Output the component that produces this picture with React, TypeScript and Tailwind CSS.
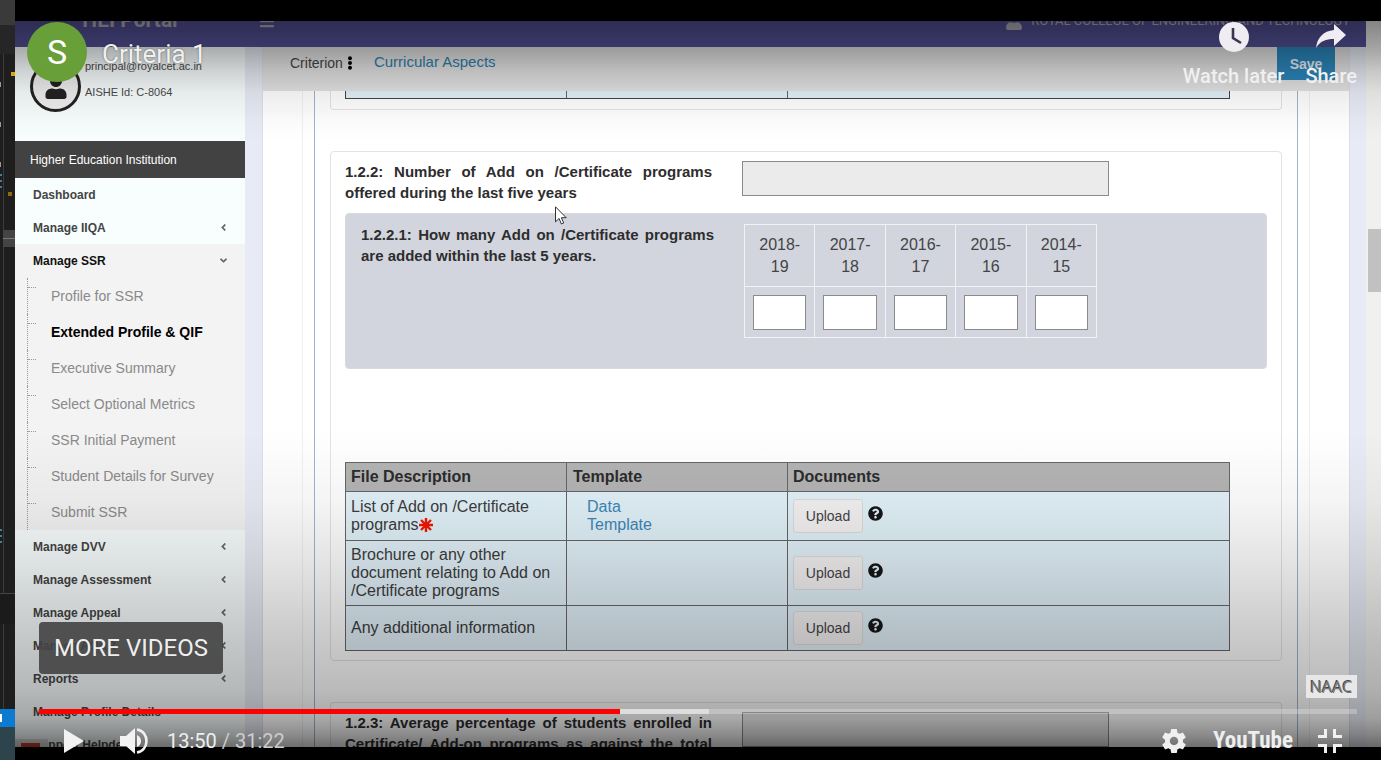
import { FaAngleDown, FaAngleLeft, FaBars, FaEllipsisV, FaQuestionCircle, FaUser } from "react-icons/fa";

const manageItems = ["Manage DVV", "Manage Assessment", "Manage Appeal", "Manage AQAR", "Reports"];
const ssrItems = [
  "Profile for SSR",
  "Extended Profile & QIF",
  "Executive Summary",
  "Select Optional Metrics",
  "SSR Initial Payment",
  "Student Details for Survey",
  "Submit SSR",
];
const years = ["2018-19", "2017-18", "2016-17", "2015-16", "2014-15"];
const documents = [
  { name: "List of Add on /Certificate programs", required: true, template: true, height: "h-[49px]" },
  { name: "Brochure or any other document relating to Add on /Certificate programs", required: false, template: false, height: "h-[65px]" },
  { name: "Any additional information", required: false, template: false, height: "h-[45px]" },
];

function EditorStrip() {
  return (
    <div aria-hidden="true" className="flex w-[15px] shrink-0 flex-col overflow-hidden bg-[#1e1e1e]">
      <div className="h-[25px] bg-[#3a3a3b]" />
      <div className="h-[29px] bg-[#262627]" />
      <div className="relative flex-1 border-b border-[#444]">
        <div className="ml-[3px] h-full border-l border-[#3c3c3c]" />
        <div className="absolute top-[18px] right-0 size-1 bg-[#d9a90a]" />
        <div className="absolute top-[138px] right-[3px] size-1 bg-[#8f6a10]" />
        <div className="absolute top-[176px] right-0 left-[3px] flex h-[17px] items-center bg-[#444]">
          <div className="h-px w-full bg-[#777]" />
        </div>
        <div className="absolute top-[120px] left-0 flex flex-col gap-1">
          <i className="h-[2px] w-[2px] bg-[#4d7a99]" />
          <i className="h-[2px] w-[2px] bg-[#4d7a99]" />
          <i className="h-[2px] w-[2px] bg-[#4d7a99]" />
        </div>
        <div className="absolute top-[28px] left-0 flex flex-col gap-[35px]">
          <i className="h-[5px] w-px bg-[#999]" />
          <i className="h-[5px] w-px bg-[#999]" />
          <i className="h-[5px] w-px bg-[#999]" />
        </div>
        <div className="absolute bottom-[50px] left-0 flex flex-col gap-1">
          <i className="h-[2px] w-[2px] bg-[#4d7a99]" />
          <i className="h-[2px] w-[2px] bg-[#4d7a99]" />
          <i className="h-[2px] w-[2px] bg-[#4d7a99]" />
        </div>
      </div>
      <div className="h-[30px] bg-[#1b1b1b]" />
      <div className="h-[85px]">
        <div className="ml-[3px] h-full border-l border-[#3c3c3c]" />
      </div>
      <div className="h-[18px] overflow-hidden bg-[#0a7bd0]">
        <div className="mt-[5px] h-2 w-[2px] bg-white" />
      </div>
      <div className="h-[33px] bg-[#2d444c]" />
    </div>
  );
}

function PortalHeader() {
  return (
    <header className="h-[26px] shrink-0 overflow-hidden bg-[#555299]">
      <div className="-mt-[26px] flex h-[52px] items-center font-[Roboto,sans-serif] text-[#b4b4bc]">
        <div className="w-[230px] text-center text-[21px] font-bold">HEI Portal</div>
        <button type="button" aria-label="Toggle navigation" className="ml-[14px]">
          <FaBars size={16} />
        </button>
        <div className="ml-auto flex items-center gap-2 pr-4 text-[13px]">
          <FaUser size={18} />
          <span>ROYAL COLLEGE OF ENGINEERING AND TECHNOLOGY</span>
        </div>
      </div>
    </header>
  );
}

function MenuRow({ label, icon, active }: { label: string; icon?: "left" | "down"; active?: boolean }) {
  return (
    <a
      href="#"
      className={`flex h-[33px] shrink-0 items-center justify-between pr-4 pl-[18px] text-xs font-bold ${active ? "bg-[#f3f3f3] text-[#111]" : "text-[#444]"}`}
    >
      {label}
      {icon === "left" && <FaAngleLeft size={11} className="text-[#666]" />}
      {icon === "down" && <FaAngleDown size={11} className="text-[#666]" />}
    </a>
  );
}

function Sidebar() {
  return (
    <nav className="flex w-[230px] shrink-0 flex-col overflow-hidden bg-[#f8fdfd]">
      <div className="flex h-[94px] shrink-0 gap-1 pt-[14px] pl-[15px]">
        <div className="flex size-[51px] shrink-0 items-end justify-center overflow-hidden rounded-full border-[3px] border-[#222] bg-[#eee]">
          <FaUser size={24} className="mb-[10px] text-[#222]" />
        </div>
        <div className="-mt-2 text-[11px] leading-[26px] text-[#4a4a4a]">
          <p>principal@royalcet.ac.in</p>
          <p>AISHE Id: C-8064</p>
        </div>
      </div>
      <h2 className="flex h-[37px] shrink-0 items-center bg-[#424242] pl-[15px] text-xs text-white">
        Higher Education Institution
      </h2>
      <MenuRow label="Dashboard" />
      <MenuRow label="Manage IIQA" icon="left" />
      <MenuRow label="Manage SSR" icon="down" active />
      <ul className="shrink-0 bg-[#f3f3f3] pt-px pl-3">
        {ssrItems.map((item) => (
          <li key={item} className="flex h-9 border-l border-dotted border-[#999]">
            <span className="mt-[9px] w-2 border-t border-dotted border-[#999]" />
            <a
              href="#"
              className={`ml-[15px] self-center text-sm ${item === "Extended Profile & QIF" ? "font-bold text-black" : "text-[#8a8a8a]"}`}
            >
              {item}
            </a>
          </li>
        ))}
      </ul>
      {manageItems.map((item) => (
        <MenuRow key={item} label={item} icon="left" />
      ))}
      <MenuRow label="Manage Profile Details" />
      <div className="relative shrink-0">
        <MenuRow label="Support Helpdesk" />
        <div className="absolute top-[11px] left-0 h-5 w-[33px] bg-[#dedede] pt-1 pl-1.5">
          <div className="h-4 w-[19px] bg-[#c9402f]" />
        </div>
      </div>
    </nav>
  );
}

function YearTable() {
  return (
    <table className="w-full table-fixed border-collapse self-start text-base leading-[22px] text-[#444]">
      <thead>
        <tr>
          {years.map((year) => (
            <th key={year} scope="col" className="h-[62px] border border-[#f1f2f5] px-3 font-normal">
              {year}
            </th>
          ))}
        </tr>
      </thead>
      <tbody>
        <tr>
          {years.map((year) => (
            <td key={year} className="h-[51px] border border-[#f1f2f5] px-2">
              <input aria-label={`Programs added in ${year}`} className="block h-[35px] w-full border border-[#8b8b8b] bg-white px-1 text-sm" />
            </td>
          ))}
        </tr>
      </tbody>
    </table>
  );
}

function DocumentTable() {
  return (
    <table className="mt-[93px] mr-[37px] table-fixed border-collapse border border-[#444] text-base leading-[18px] text-[#3c3c3c]">
      <thead>
        <tr className="h-[29px] bg-[#b4b4b4] text-left text-[#2b2b2b]">
          <th scope="col" className="w-1/4 border border-[#666] px-[5px]">File Description</th>
          <th scope="col" className="w-1/4 border border-[#666] px-1.5">Template</th>
          <th scope="col" className="border border-[#666] px-[5px]">Documents</th>
        </tr>
      </thead>
      <tbody>
        {documents.map((doc) => (
          <tr key={doc.name} className={`bg-[#e2f1f9] ${doc.height}`}>
            <td className="border border-[#666] px-[5px]">
              {doc.name}
              {doc.required && (
                <svg viewBox="0 0 14 14" role="img" aria-label="required" className="inline size-[14px] align-[-2px]">
                  <path d="M7 0v14M0 7h14M2 2l10 10M12 2L2 12" stroke="#f01800" strokeWidth="2.4" />
                </svg>
              )}
            </td>
            <td className="border border-[#666] px-5">
              {doc.template && (
                <a href="#" className="block w-[70px] text-[#3c87b8]">
                  Data Template
                </a>
              )}
            </td>
            <td className="border border-[#666] px-[5px]">
              <div className="flex items-center gap-[5px]">
                <button type="button" className="h-[34px] w-[70px] rounded-[3px] border border-[#dcdcdc] bg-[#f3f1f2] text-sm text-[#444]">
                  Upload
                </button>
                <FaQuestionCircle size={15} className="mb-1.5 text-[#161616]" />
              </div>
            </td>
          </tr>
        ))}
      </tbody>
    </table>
  );
}

function MetricRow({ id, text }: { id: string; text: string }) {
  return (
    <div className="grid grid-cols-[367fr_367fr_128fr] gap-x-[30px]">
      <label htmlFor={id} className="text-justify text-[15px] leading-[21px] font-bold text-[#2d2d2d]">
        {text}
      </label>
      <input id={id} readOnly className="h-[35px] w-full border border-[#8b8b8b] bg-[#ebebeb] px-2 text-sm" />
    </div>
  );
}

function MainContent() {
  return (
    <main className="flex min-w-0 flex-1 flex-col overflow-hidden border-x border-[#dcdfe8] bg-white">
      <div className="flex h-11 shrink-0 items-start bg-[#e4e4e4] pr-[14px] pl-[27px]">
        <span className="mt-[5px] flex items-center text-sm leading-[22px] text-[#444]">
          Criterion
          <FaEllipsisV size={14} className="text-black" />
        </span>
        <a href="#" className="mt-1 ml-[17px] text-[15px] leading-[22px] text-[#2b7fae]">
          Curricular Aspects
        </a>
        <button type="button" className="ml-auto h-[33px] w-[58px] bg-[#2b86bb] text-sm font-bold text-[#e5eef4]">
          Save
        </button>
      </div>
      <div className="mx-[39px] flex flex-1 flex-col border-x border-[#f0f0f0] px-[11px]">
        <div className="flex flex-1 flex-col border-x border-[#9fb4cc] px-[15px]">
          <section className="h-[19px] shrink-0 rounded-b border border-t-0 border-[#e3e3e3] px-[14px]">
            <div className="mr-[37px] flex h-2 border-x border-b border-[#444] bg-[#e2f1f9]">
              <div className="w-1/4 border-r border-[#666]" />
              <div className="w-1/4 border-r border-[#666]" />
            </div>
          </section>
          <section className="mt-[41px] flex flex-col rounded border border-[#e3e3e3] px-[14px] py-[9px]">
            <MetricRow id="metric-122" text="1.2.2: Number of Add on /Certificate programs offered during the last five years" />
            <div className="mt-[10px] grid h-[156px] grid-cols-[353fr_353fr_124fr] gap-x-[30px] rounded border border-[#d8dae0] bg-[#d2d5de] px-[15px] pt-[10px]">
              <p className="text-justify text-[15px] leading-[21px] font-bold text-[#2d2d2d]">
                1.2.2.1: How many Add on /Certificate programs are added within the last 5 years.
              </p>
              <YearTable />
            </div>
            <DocumentTable />
          </section>
          <section className="mt-[41px] rounded-t border border-b-0 border-[#e3e3e3] px-[14px] pt-[9px]">
            <MetricRow id="metric-123" text="1.2.3: Average percentage of students enrolled in Certificate/ Add-on programs as against the total number of students during the last five years" />
          </section>
        </div>
      </div>
    </main>
  );
}

function PlayerTop() {
  return (
    <div className="absolute inset-x-0 top-[22px] flex items-start pr-6 pl-3 font-[Roboto,sans-serif] text-[#f0f0f0]">
      <a href="#" aria-label="Channel" className="flex size-[60px] items-center justify-center rounded-full bg-[#689f38] text-[34px] text-white">
        S
      </a>
      <a href="#" className="mt-4 ml-[15px] text-[26px] leading-8 [text-shadow:0_0_2px_rgba(0,0,0,.5)]">
        Criteria 1
      </a>
      <div className="ml-auto flex items-end gap-[21px] text-xl leading-6 font-medium [text-shadow:0_0_3px_rgba(0,0,0,.6)]">
        <button type="button" className="flex flex-col items-center gap-3">
          <svg viewBox="0 0 30 30" className="size-[30px]" aria-hidden="true">
            <circle cx="15" cy="15" r="15" fill="#efedf2" />
            <path d="M14 6v10l8 5" fill="none" stroke="#39374f" strokeWidth="2.6" />
          </svg>
          Watch later
        </button>
        <button type="button" className="flex flex-col items-center gap-3">
          <svg viewBox="0 0 30 30" className="size-[30px]" aria-hidden="true">
            <path d="M18 2l12 11-12 11v-7C10 17 4 19 0 26 1 16 7 9 18 8z" fill="#efedf2" />
          </svg>
          Share
        </button>
      </div>
    </div>
  );
}

function PlayerBottom() {
  return (
    <div className="absolute inset-x-6 bottom-0 flex flex-col font-[Roboto,sans-serif] text-[#eee]">
      <div className="flex items-end justify-between">
        <button type="button" className="mb-[35px] h-[52px] w-[184px] rounded bg-[#424242]/90 text-2xl">
          MORE VIDEOS
        </button>
        <span className="mb-[11px] flex h-[23px] w-[51px] items-center justify-center bg-[#e8e8e8] font-['Open_Sans',sans-serif] text-base text-[#777] [text-shadow:-1px_-1px_0_#444]">
          NAAC
        </span>
      </div>
      <div className="relative h-[5px] bg-white/25">
        <div className="absolute inset-y-0 left-0 w-[50.8%] bg-white/45" />
        <div className="absolute inset-y-0 left-0 w-[44.1%] bg-[#f00]" />
        <input type="range" aria-label="Seek" min={0} max={1882} defaultValue={830} className="absolute inset-0 h-full w-full cursor-pointer opacity-0" />
      </div>
      <div className="flex h-[46px] items-center pt-2 pr-[15px] pl-[25px]">
        <button type="button" aria-label="Play">
          <svg viewBox="0 0 20 24" className="h-6 w-5">
            <path d="M0 0l20 12L0 24z" fill="#f2f2f2" />
          </svg>
        </button>
        <button type="button" aria-label="Mute" className="ml-9">
          <svg viewBox="0 0 28 26" className="h-[26px] w-7">
            <path d="M0 8h6l9-8v26l-9-8H0z" fill="#f2f2f2" />
            <path d="M17 7q4 2 4 6t-4 6z" fill="#f2f2f2" />
            <path d="M17 1.5c6 1 9.500 6 9.500 11.500S23 23.500 17 24.500" fill="none" stroke="#f2f2f2" strokeWidth="2.600" />
          </svg>
        </button>
        <span className="ml-[19px] text-xl leading-6">
          13:50 <span className="text-[#ccc]">/ 31:22</span>
        </span>
        <button type="button" aria-label="Settings" className="ml-auto">
          <svg viewBox="2 2 20 20" className="size-6" fill="#f0f0f0">
            <path d="M19.430 12.980c.04-.32.07-.64.07-.98s-.03-.66-.07-.98l2.110-1.650c.19-.15.24-.42.12-.64l-2-3.460c-.12-.22-.39-.3-.61-.22l-2.490 1c-.52-.4-1.080-.73-1.690-.98l-.38-2.650C14.460 2.180 14.250 2 14 2h-4c-.25 0-.46.18-.49.42l-.38 2.650c-.61.25-1.170.59-1.690.98l-2.490-1c-.23-.09-.49 0-.61.22l-2 3.460c-.13.22-.07.49.12.64l2.110 1.650c-.04.32-.07.65-.07.98s.03.66.07.98l-2.110 1.650c-.19.15-.24.42-.12.64l2 3.460c.12.22.39.3.61.22l2.490-1c.52.4 1.080.73 1.690.98l.38 2.650c.03.24.24.42.49.42h4c.25 0 .46-.18.49-.42l.38-2.650c.61-.25 1.170-.59 1.690-.98l2.490 1c.23.09.49 0 .61-.22l2-3.460c.12-.22.07-.49-.12-.64l-2.110-1.650zM12 15.500c-1.930 0-3.500-1.570-3.500-3.500s1.570-3.500 3.500-3.500 3.500 1.570 3.500 3.500-1.570 3.500-3.500 3.500z" />
          </svg>
        </button>
        <a href="#" className="ml-[27px] font-['Liberation_Sans_Narrow','Roboto_Condensed','Liberation_Sans',sans-serif] text-[23px] font-bold">
          YouTube
        </a>
        <button type="button" aria-label="Exit full screen" className="ml-[25px]">
          <svg viewBox="0 0 24 24" className="size-6" fill="none" stroke="#f0f0f0" strokeWidth="3">
            <path d="M0 7.500h7.500V0M16.500 0v7.500H24M0 16.500h7.500V24M24 16.500h-7.500V24" />
          </svg>
        </button>
      </div>
    </div>
  );
}

export default function App() {
  return (
    <div className="flex h-screen overflow-hidden bg-black font-['Liberation_Sans',Arial,sans-serif]">
      <EditorStrip />
      <div className="relative flex min-w-0 flex-1 flex-col pt-[21px] pb-[13px]">
        <div className="relative flex min-h-0 flex-1 overflow-hidden">
          <div className="flex min-w-0 flex-1 flex-col">
            <PortalHeader />
            <div className="flex min-h-0 flex-1 bg-[#e8ebf5] pr-4">
              <Sidebar />
              <div className="w-[17px] shrink-0" />
              <MainContent />
            </div>
          </div>
          <div className="w-[15px] shrink-0 bg-[#f0f0ef] pt-[208px] pl-0.5">
            <div className="h-[63px] bg-[#c1c1c1]" />
          </div>
          <svg viewBox="0 0 12 19" className="absolute top-[185px] left-[540px] h-[19px] w-3" aria-hidden="true">
            <path d="M.5.8v15l3.600-3.300 2.300 5.500 2.300-1-2.300-5.300h4.800z" fill="#fff" stroke="#333" strokeWidth="1" />
          </svg>
          <div className="pointer-events-none absolute inset-x-0 top-0 h-[120px] bg-[linear-gradient(to_bottom,rgba(0,0,0,.45)_0%,rgba(0,0,0,.32)_22%,rgba(0,0,0,.17)_42%,rgba(0,0,0,.07)_60%,rgba(0,0,0,.02)_84%,transparent_100%)]" />
          <div className="pointer-events-none absolute inset-x-0 bottom-0 h-[317px] bg-[linear-gradient(to_top,rgba(0,0,0,.57)_0%,rgba(0,0,0,.45)_4%,rgba(0,0,0,.34)_9%,rgba(0,0,0,.27)_18%,rgba(0,0,0,.21)_34%,rgba(0,0,0,.16)_46%,rgba(0,0,0,.1)_60%,rgba(0,0,0,.04)_78%,transparent_100%)]" />
        </div>
        <PlayerTop />
        <PlayerBottom />
      </div>
    </div>
  );
}
